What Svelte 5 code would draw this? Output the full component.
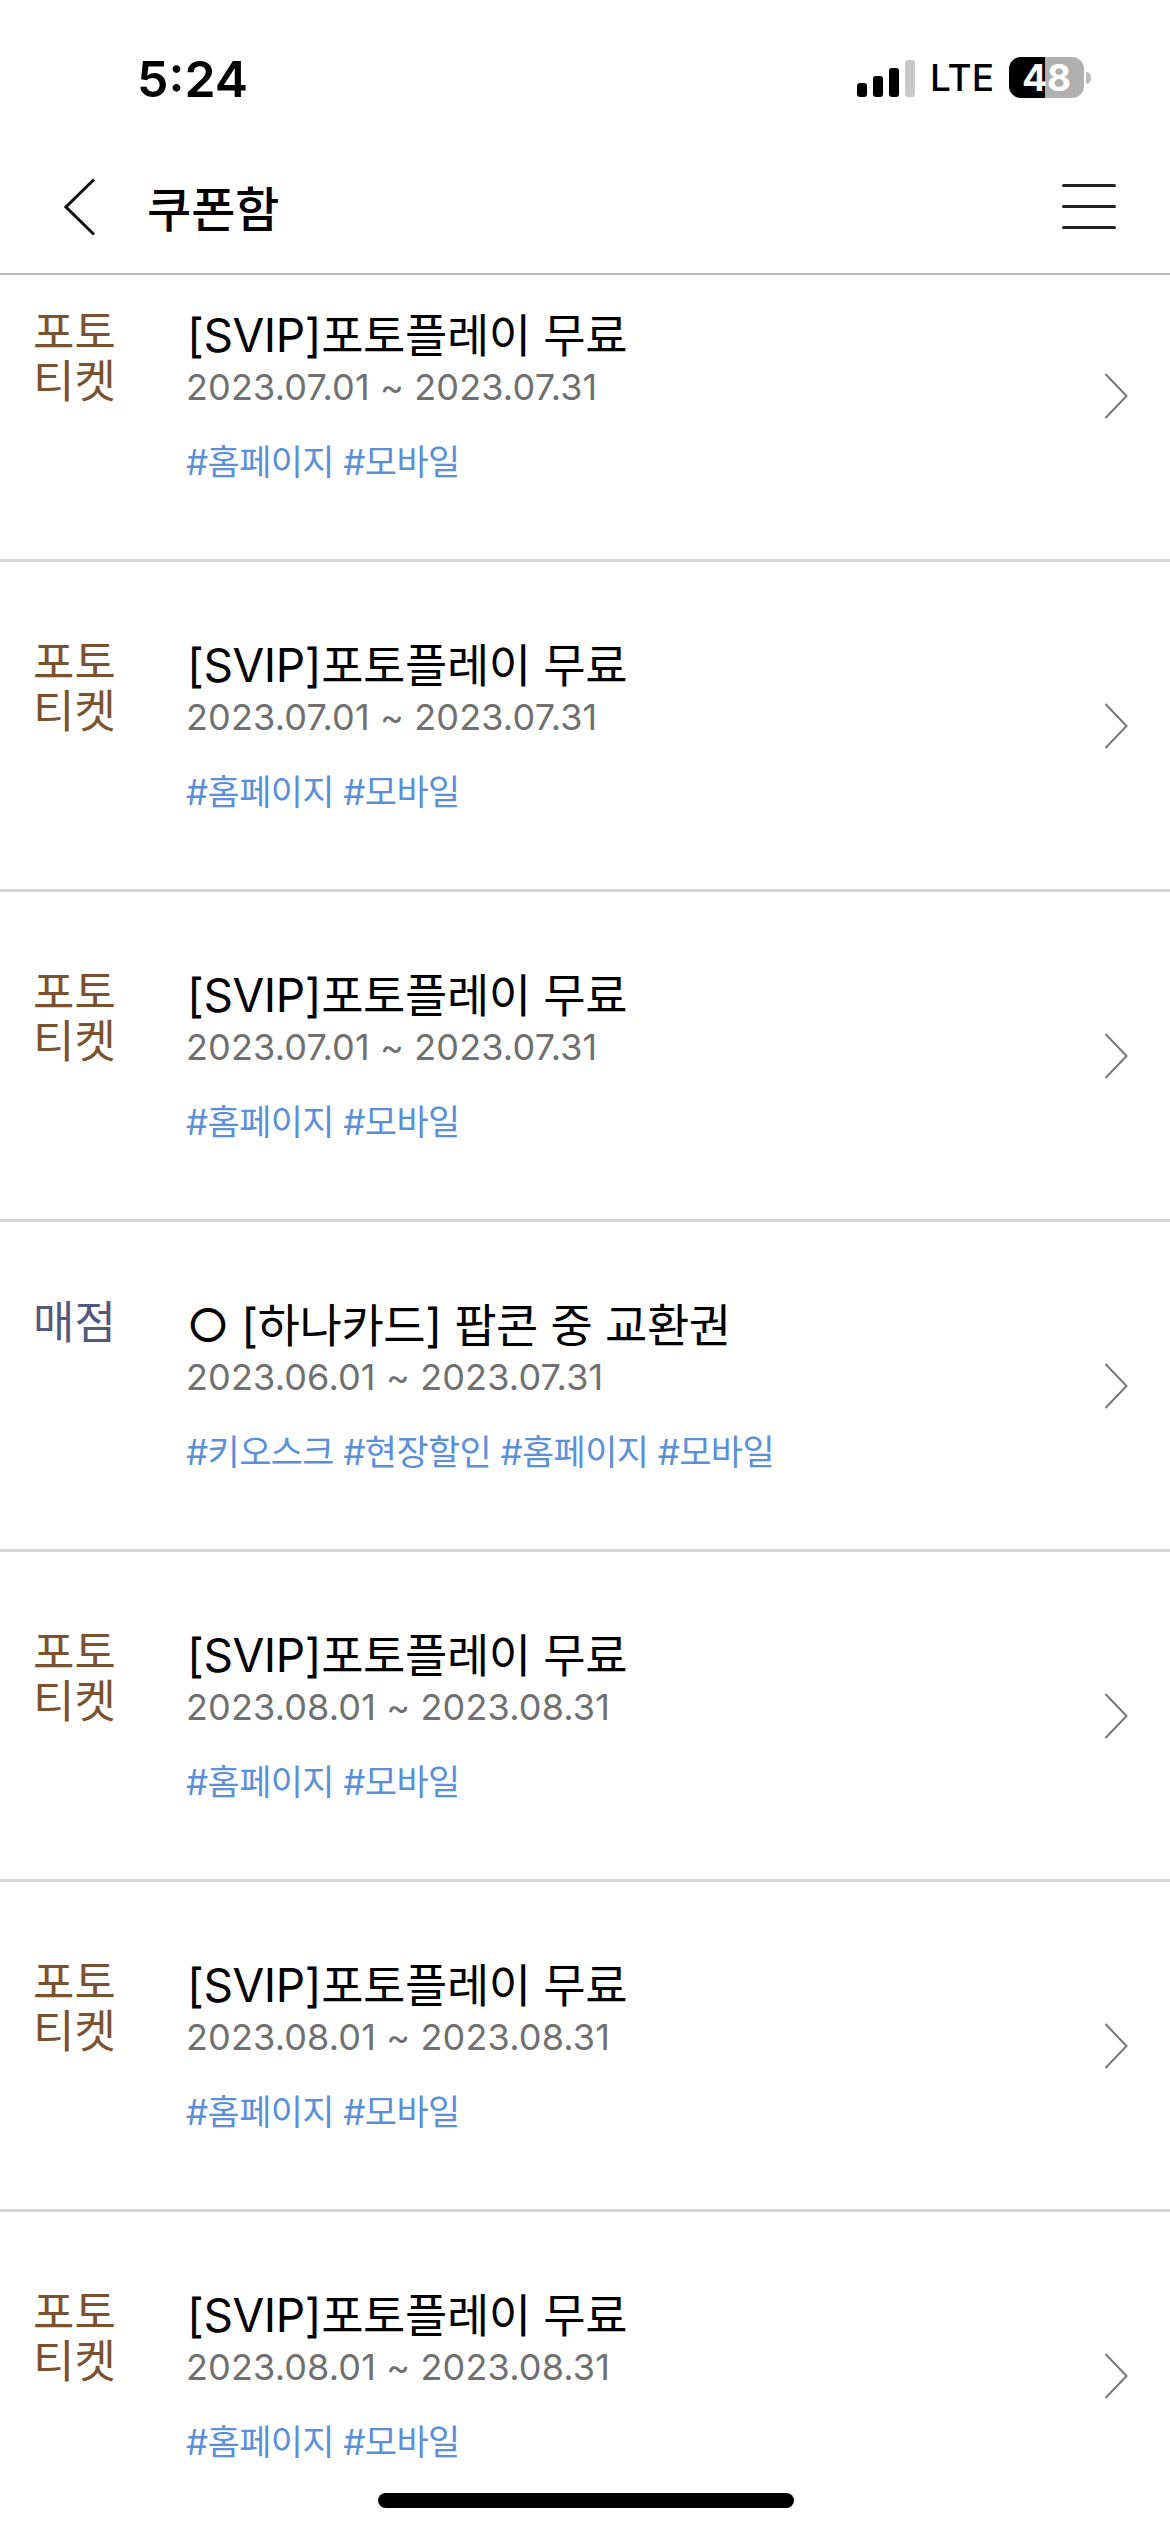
<script>
  const rows = [
    { cat: ['포토', '티켓'], kind: 'photo', title: '[SVIP]포토플레이 무료', date: '2023.07.01 ~ 2023.07.31', tags: '#홈페이지 #모바일' },
    { cat: ['포토', '티켓'], kind: 'photo', title: '[SVIP]포토플레이 무료', date: '2023.07.01 ~ 2023.07.31', tags: '#홈페이지 #모바일' },
    { cat: ['포토', '티켓'], kind: 'photo', title: '[SVIP]포토플레이 무료', date: '2023.07.01 ~ 2023.07.31', tags: '#홈페이지 #모바일' },
    { cat: ['매점'], kind: 'store', title: '○ [하나카드] 팝콘 중 교환권', date: '2023.06.01 ~ 2023.07.31', tags: '#키오스크 #현장할인 #홈페이지 #모바일' },
    { cat: ['포토', '티켓'], kind: 'photo', title: '[SVIP]포토플레이 무료', date: '2023.08.01 ~ 2023.08.31', tags: '#홈페이지 #모바일' },
    { cat: ['포토', '티켓'], kind: 'photo', title: '[SVIP]포토플레이 무료', date: '2023.08.01 ~ 2023.08.31', tags: '#홈페이지 #모바일' },
    { cat: ['포토', '티켓'], kind: 'photo', title: '[SVIP]포토플레이 무료', date: '2023.08.01 ~ 2023.08.31', tags: '#홈페이지 #모바일' }
  ];
</script>

<div class="screen">
  <div class="top">
    <div class="status">
      <span class="time">5:24</span>
      <div class="indicators">
        <div class="signal">
          <i class="b1"></i><i class="b2"></i><i class="b3"></i><i class="b4"></i>
        </div>
        <span class="lte">LTE</span>
        <div class="battery"><span class="level">48</span></div>
        <span class="nub"></span>
      </div>
    </div>
    <header class="nav">
      <svg class="back" width="32" height="58" viewBox="0 0 32 58" fill="none">
        <path d="M30 1.5 L2 29 L30 56.5" stroke="#111" stroke-width="3" />
      </svg>
      <h1>쿠폰함</h1>
      <div class="menu"><i></i><i></i><i></i></div>
    </header>
  </div>

  <div class="list">
    {#each rows as row}
      <article class="row">
        <div class="cat {row.kind}">
          {#each row.cat as c}<div>{c}</div>{/each}
        </div>
        <div class="body">
          <div class="title">{row.title}</div>
          <div class="date">{row.date}</div>
          <div class="tags">{row.tags}</div>
        </div>
        <svg class="arrow" width="24" height="46" viewBox="0 0 24 46" fill="none">
          <path d="M1.5 1 L22.5 23 L1.5 45" stroke="#777" stroke-width="2" />
        </svg>
      </article>
    {/each}
  </div>

  <div class="home"></div>
</div>

<style>
  :global(body) {
    margin: 0;
    background: #fff;
  }
  .screen {
    position: relative;
    width: 1170px;
    height: 2532px;
    overflow: hidden;
    background: #fff;
    font-family: "Noto Sans CJK KR", "Noto Sans", sans-serif;
  }
  .top {
    position: relative;
    z-index: 2;
    background: #fff;
    border-bottom: 2px solid #b8b8b8;
  }
  .status {
    height: 112px;
    display: flex;
    align-items: flex-start;
    justify-content: space-between;
    padding: 0 79px 0 137px;
    box-sizing: border-box;
  }
  .time {
    margin-top: 49px;
    font-family: Inter, "Liberation Sans", sans-serif;
    font-weight: 600;
    font-size: 50px;
    line-height: 60px;
    color: #000;
  }
  .indicators {
    margin-top: 57px;
    display: flex;
    align-items: center;
    height: 41px;
  }
  .signal {
    display: flex;
    align-items: flex-end;
    gap: 6px;
    height: 39px;
  }
  .signal i {
    display: block;
    width: 10px;
    background: #000;
    border-radius: 3px;
  }
  .b1 { height: 14px; }
  .b2 { height: 21px; }
  .b3 { height: 29px; }
  .signal .b4 { height: 37px; background: #c9c9c9; }
  .lte {
    margin-left: 15px;
    font-family: Inter, "Liberation Sans", sans-serif;
    font-weight: 500;
    font-size: 37px;
    line-height: 41px;
    color: #000;
  }
  .battery {
    margin-left: 15px;
    width: 75px;
    height: 41px;
    border-radius: 12px;
    display: flex;
    align-items: center;
    justify-content: center;
    background: linear-gradient(to right, #000 36px, #b0b0b0 36px);
  }
  .level {
    font-family: Inter, "Liberation Sans", sans-serif;
    font-weight: 700;
    font-size: 37px;
    line-height: 41px;
    color: #fff;
  }
  .nub {
    margin-left: 2px;
    width: 5px;
    height: 12px;
    background: #bdbdbd;
    border-radius: 0 6px 6px 0;
  }
  .nav {
    height: 161px;
    display: flex;
    align-items: center;
    box-sizing: border-box;
    padding: 28px 54px 0 64px;
  }
  .back {
    flex: none;
  }
  h1 {
    margin: -2px 0 0 51px;
    flex: 1;
    font-size: 48px;
    line-height: 60px;
    font-weight: 500;
    color: #000;
  }
  .menu {
    display: flex;
    flex-direction: column;
    gap: 18px;
  }
  .menu i {
    display: block;
    width: 54px;
    height: 3px;
    background: #222;
    border-radius: 2px;
  }
  .list {
    margin-top: -43px;
  }
  .row {
    height: 330px;
    box-sizing: border-box;
    border-bottom: 3px solid #d6d6d6;
    display: flex;
    align-items: flex-start;
    position: relative;
    padding-left: 33px;
  }
  .cat {
    width: 154px;
    flex: none;
    padding-top: 73px;
    font-size: 45px;
    line-height: 49px;
  }
  .photo { color: #7b5230; }
  .store { color: #54587f; }
  .body {
    padding-top: 73px;
    flex: 1;
  }
  .title {
    font-family: Inter, "Noto Sans CJK KR", sans-serif;
    font-size: 46px;
    line-height: 60px;
    letter-spacing: -0.4px;
    color: #000;
    white-space: nowrap;
  }
  .date {
    margin-top: -3px;
    margin-left: -1px;
    font-family: Inter, "Liberation Sans", sans-serif;
    font-size: 36px;
    line-height: 50px;
    letter-spacing: 0.15px;
    color: #707070;
  }
  .tags {
    margin-top: 25px;
    margin-left: -1px;
    font-family: Inter, "Noto Sans CJK KR", sans-serif;
    font-size: 35px;
    line-height: 50px;
    letter-spacing: -0.6px;
    color: #5b8fd8;
    white-space: nowrap;
  }
  .arrow {
    position: absolute;
    top: 141px;
    right: 42px;
  }
  .home {
    position: absolute;
    left: 378px;
    top: 2493px;
    width: 416px;
    height: 15px;
    border-radius: 8px;
    background: #000;
  }
</style>
